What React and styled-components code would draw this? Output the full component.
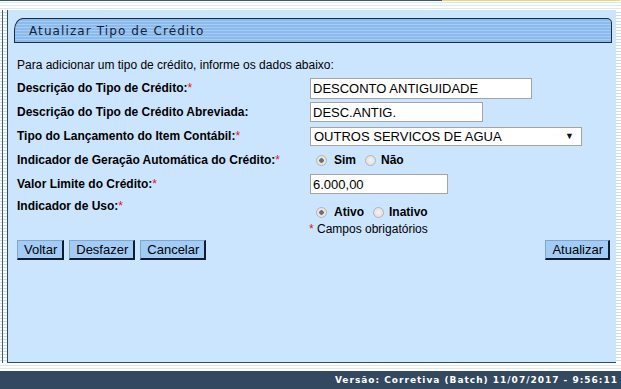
import React from 'react';
import styled, { createGlobalStyle } from 'styled-components';

const GlobalStyle = createGlobalStyle`
  body {
    margin: 0;
    background: #fff;
    font-family: "Liberation Sans", Arial, sans-serif;
  }
`;

const Page = styled.div`
  width: 621px;
  height: 389px;
  display: flex;
  flex-direction: column;
  overflow: hidden;
  background: #fff;
`;

const TopStripes = styled.div`
  height: 10px;
  flex: none;
  background:
    linear-gradient(to right, #3b5573 0 442px, #f1d46c 442px 620px, #fff 620px) top / 100% 1px no-repeat,
    repeating-linear-gradient(to bottom, #fff 0 2px, #dbe9f7 2px 3px);
`;

const Middle = styled.div`
  flex: 1;
  display: flex;
  min-height: 0;
`;

const SideStrip = styled.div`
  flex: none;
  width: ${(p) => p.$width}px;
  background:
    linear-gradient(to right, transparent 2px, ${(p) => (p.$line ? '#3d5878' : 'transparent')} 2px 3px, transparent 3px),
    repeating-linear-gradient(to bottom, #fff 0 2px, #c9dcef 2px 3px);
`;

const Panel = styled.div`
  flex: 1;
  background: #cce5fe;
  border-left: 1px solid #2e4a68;
  border-bottom: 1px solid #2e4a68;
  padding: 8px 4px 0 6px;
  display: flex;
  flex-direction: column;
`;

const Header = styled.div`
  height: 23px;
  border: 1px solid #1b2b40;
  border-radius: 9px 5px 0 0 / 12px 5px 0 0;
  background: repeating-linear-gradient(to bottom, #8bbaec 0 2px, #a6ccf4 2px 3px);
  display: flex;
  align-items: center;
  padding-left: 14px;
`;

const Title = styled.span`
  font-family: "DejaVu Sans", Verdana, sans-serif;
  font-size: 12px;
  letter-spacing: 1.1px;
  color: #14233a;
  margin-top: 1px;
`;

const Form = styled.div`
  display: flex;
  flex-direction: column;
  padding: 11px 2px 0 3px;
  font-size: 12px;
  color: #000;
`;

const Row = styled.div`
  display: grid;
  grid-template-columns: 293px 1fr;
  height: ${(p) => p.$h || 24}px;
  align-items: center;
`;

const Intro = styled.div`
  height: 22px;
  display: flex;
  align-items: center;
`;

const Label = styled.span`
  font-weight: bold;
  align-self: ${(p) => p.$top ? 'start' : 'center'};
  padding-top: ${(p) => p.$top ? 3 : 0}px;
`;

const Req = styled.span`
  color: #e8101a;
  font-weight: normal;
`;

const TextBox = styled.input`
  box-sizing: border-box;
  width: ${(p) => p.$w}px;
  height: ${(p) => p.$h || 21}px;
  border: 1px solid #a4a4a4;
  background: #fff;
  font-family: "Liberation Sans", Arial, sans-serif;
  font-size: 13px;
  color: #000;
  padding: 0 2px;
  margin: 0;
  outline: none;
`;

const SelectBox = styled.div`
  position: relative;
  box-sizing: border-box;
  width: 272px;
  height: 19px;
  border: 1px solid #a4a4a4;
  background: #fff;
  font-size: 13px;
  display: flex;
  align-items: center;
  padding-left: 3px;
`;

const Arrow = styled.span`
  position: absolute;
  right: 7px;
  top: 3px;
  font-size: 9px;
  color: #111;
`;

const RadioGroup = styled.div`
  display: flex;
  align-items: center;
  padding-left: 6px;
  margin-top: ${(p) => p.$shift || 0}px;
`;

const Radio = styled.span`
  box-sizing: border-box;
  width: 11px;
  height: 11px;
  border-radius: 50%;
  border: 1px solid #b4b4b4;
  background: radial-gradient(circle, ${(p) => (p.$on ? '#6e6e6e 0 2px, #e6e6e6 2.5px' : '#f2f2f2 0, #dcdcdc 100%')});
  margin-right: ${(p) => p.$gap || 7}px;
`;

const RadioText = styled.span`
  font-weight: bold;
  margin-right: 9px;
`;

const Note = styled.div`
  grid-column: 2;
  margin-left: -1px;
`;

const Buttons = styled.div`
  display: flex;
  justify-content: space-between;
  align-items: center;
  margin-top: 2px;
`;

const Group = styled.div`
  display: flex;
  gap: 5px;
`;

const Button = styled.button`
  height: 20px;
  padding: 0 5px 0 6px;
  background: #a2ccf6;
  border: 1px solid;
  border-color: #7ea6d2 #0f1d2e #0f1d2e #7ea6d2;
  border-width: 1px 2px 2px 1px;
  font-family: "Liberation Sans", Arial, sans-serif;
  font-size: 13px;
  color: #000;
  cursor: pointer;
`;

const BottomStripes = styled.div`
  height: 8px;
  flex: none;
  background: repeating-linear-gradient(to bottom, #fff 0 2px, #dbe9f7 2px 3px);
`;

const Footer = styled.div`
  height: 18px;
  flex: none;
  background: #33495f;
  color: #fff;
  display: flex;
  align-items: center;
  justify-content: flex-end;
  padding-right: 3px;
  font-family: "DejaVu Sans", Verdana, sans-serif;
  font-weight: bold;
  font-size: 9px;
  letter-spacing: 1px;
`;

export default function App() {
  return (
    <>
      <GlobalStyle />
      <Page>
        <TopStripes />
        <Middle>
          <SideStrip $width={7} $line />
          <Panel>
            <Header>
              <Title>Atualizar Tipo de Crédito</Title>
            </Header>
            <Form>
              <Intro>Para adicionar um tipo de crédito, informe os dados abaixo:</Intro>
              <Row>
                <Label>Descrição do Tipo de Crédito:<Req>*</Req></Label>
                <TextBox $w={222} defaultValue="DESCONTO ANTIGUIDADE" />
              </Row>
              <Row>
                <Label>Descrição do Tipo de Crédito Abreviada:</Label>
                <TextBox $w={173} $h={20} defaultValue="DESC.ANTIG." />
              </Row>
              <Row>
                <Label>Tipo do Lançamento do Item Contábil:<Req>*</Req></Label>
                <SelectBox>
                  OUTROS SERVICOS DE AGUA
                  <Arrow>▼</Arrow>
                </SelectBox>
              </Row>
              <Row>
                <Label>Indicador de Geração Automática do Crédito:<Req>*</Req></Label>
                <RadioGroup>
                  <Radio $on />
                  <RadioText>Sim</RadioText>
                  <Radio $gap={5} />
                  <RadioText>Não</RadioText>
                </RadioGroup>
              </Row>
              <Row>
                <Label>Valor Limite do Crédito:<Req>*</Req></Label>
                <TextBox $w={138} $h={20} defaultValue="6.000,00" />
              </Row>
              <Row>
                <Label $top>Indicador de Uso:<Req>*</Req></Label>
                <RadioGroup $shift={8}>
                  <Radio $on />
                  <RadioText>Ativo</RadioText>
                  <Radio $gap={5} />
                  <RadioText>Inativo</RadioText>
                </RadioGroup>
              </Row>
              <Row $h={18}>
                <Note><Req>*</Req> Campos obrigatórios</Note>
              </Row>
              <Buttons>
                <Group>
                  <Button>Voltar</Button>
                  <Button>Desfazer</Button>
                  <Button>Cancelar</Button>
                </Group>
                <Button>Atualizar</Button>
              </Buttons>
            </Form>
          </Panel>
          <SideStrip $width={5} />
        </Middle>
        <BottomStripes />
        <Footer>Versão: Corretiva (Batch) 11/07/2017 - 9:56:11</Footer>
      </Page>
    </>
  );
}
